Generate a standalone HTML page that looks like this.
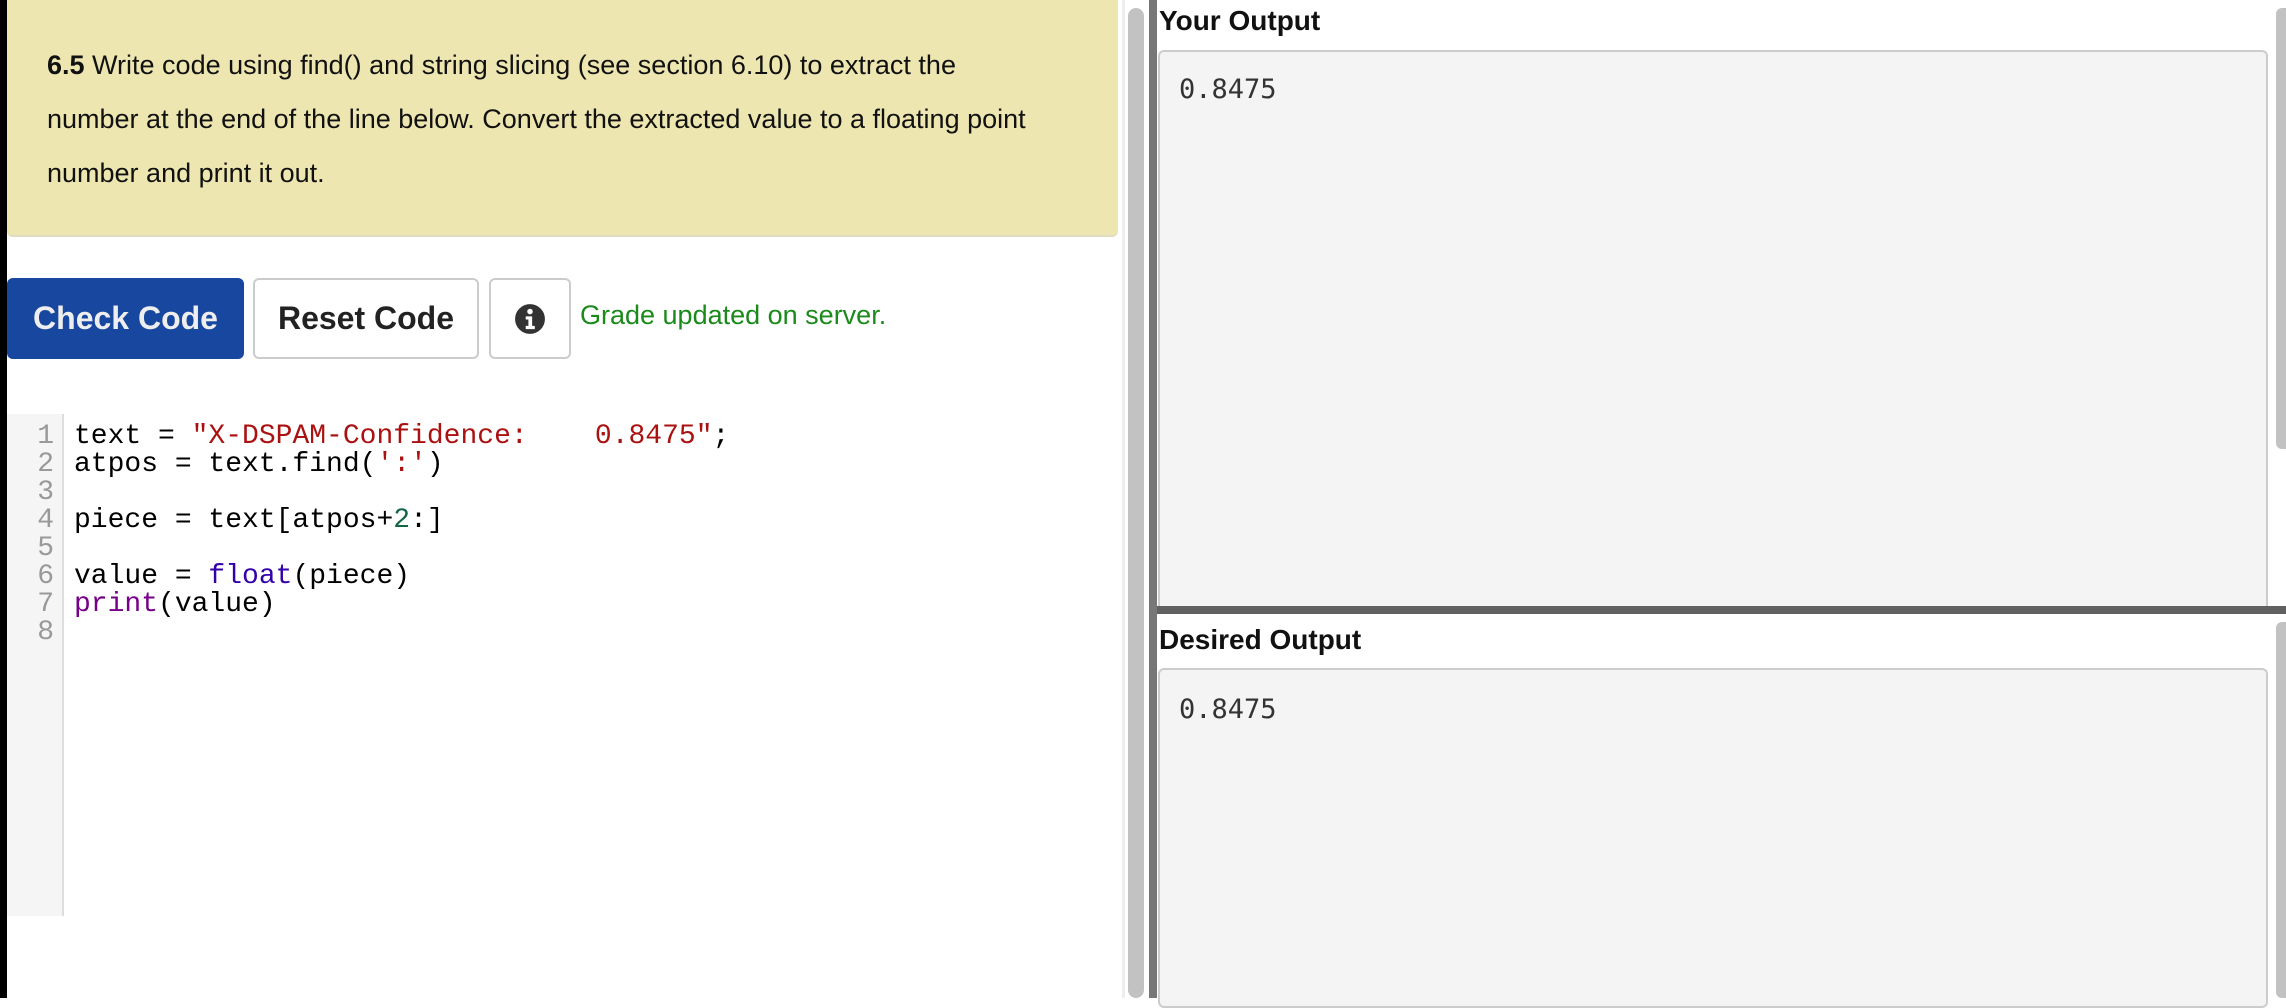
<!DOCTYPE html>
<html><head><meta charset="utf-8"><style>
*{box-sizing:border-box;margin:0;padding:0}
body{width:2286px;height:998px;overflow:hidden;background:#fff;font-family:"Liberation Sans",Arial,sans-serif;position:relative}
.abs{position:absolute}
.lb{left:0;top:0;width:7px;height:998px;background:#000}
.yel{left:7px;top:0;width:1111px;height:237px;background:#ede6b0;border-radius:0 0 6px 6px;border-bottom:2px solid #e0dcc0}
.yel p{position:absolute;left:40px;top:38px;width:1070px;font-size:27px;line-height:54px;color:#111;white-space:nowrap}
.btn{top:278px;height:81px;border-radius:6px;font-weight:bold;font-size:32px;display:flex;align-items:center;justify-content:center}
.b1{left:7px;width:237px;background:#17479e;color:#eee}
.b2{left:253px;width:226px;background:#fff;border:2px solid #ccc;color:#222}
.b3{left:489px;width:82px;background:#fff;border:2px solid #ccc}
.grade{left:580px;top:300px;font-size:27px;color:#1a8a1a}
.gut{left:7px;top:414px;width:57px;height:502px;background:#f5f5f5;border-right:2px solid #ddd}
.code{left:10px;top:423px;font-family:"Liberation Mono",monospace;font-size:28px;line-height:28px;white-space:pre;color:#000}
.ln{display:inline-block;width:44px;text-align:right;color:#999;margin-right:20px}
.s{color:#a11}.n{color:#164}.k{color:#30a}.p{color:#708}
.sb{left:1128px;top:8px;width:16px;height:990px;background:#c2c2c2;border-radius:8px}
.sbl{left:1122px;top:0;width:3px;height:998px;background:#eee}
.vl{left:1149px;top:0;width:8px;height:998px;background:#777}
.h{left:1159px;font-size:28px;font-weight:bold;color:#111}
.box{left:1158px;width:1110px;background:#f4f4f4;border:2px solid #ccc;border-radius:6px}
.val{left:1179px;font-family:"DejaVu Sans Mono",monospace;font-size:27px;color:#333}
.hb{left:1157px;top:606px;width:1129px;height:8px;background:#616161}
.rs{left:2276px;width:10px;background:#c2c2c2;border-radius:6px 0 0 6px}
</style></head><body>
<div class="abs lb"></div>
<div class="abs yel"><p><b>6.5</b> Write code using find() and string slicing (see section 6.10) to extract the<br>number at the end of the line below. Convert the extracted value to a floating point<br>number and print it out.</p></div>
<div class="abs btn b1">Check Code</div>
<div class="abs btn b2">Reset Code</div>
<div class="abs btn b3"><svg width="32" height="32" viewBox="0 0 30 30"><circle cx="15" cy="15" r="14" fill="#333"/><circle cx="15" cy="8" r="2.6" fill="#fff"/><path d="M11 12.5h6v9h2.5v3h-8.5v-3h2.5v-6h-2.5z" fill="#fff"/></svg></div>
<div class="abs grade">Grade updated on server.</div>
<div class="abs gut"></div>
<div class="abs code"><span class="ln">1</span>text = <span class="s">"X-DSPAM-Confidence:    0.8475"</span>;
<span class="ln">2</span>atpos = text.find(<span class="s">':'</span>)
<span class="ln">3</span>
<span class="ln">4</span>piece = text[atpos+<span class="n">2</span>:]
<span class="ln">5</span>
<span class="ln">6</span>value = <span class="k">float</span>(piece)
<span class="ln">7</span><span class="p">print</span>(value)
<span class="ln">8</span></div>
<div class="abs sbl"></div>
<div class="abs sb"></div>
<div class="abs vl"></div>
<div class="abs h" style="top:5px">Your Output</div>
<div class="abs box" style="top:50px;height:562px;border-bottom:none;border-radius:6px 6px 0 0"></div>
<div class="abs val" style="top:74px">0.8475</div>
<div class="abs hb"></div>
<div class="abs h" style="top:624px">Desired Output</div>
<div class="abs box" style="top:668px;height:340px"></div>
<div class="abs val" style="top:694px">0.8475</div>
<div class="abs rs" style="top:8px;height:441px"></div>
<div class="abs rs" style="top:622px;height:376px"></div>
</body></html>
